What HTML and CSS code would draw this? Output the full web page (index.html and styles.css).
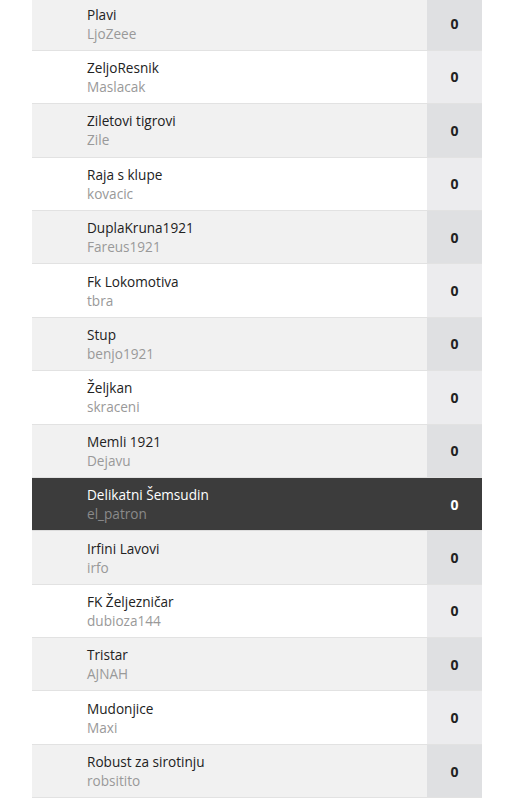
FILE: index.html
```html
<!DOCTYPE html>
<html lang="hr">
<head>
<meta charset="utf-8">
<title>Tablica</title>
<link rel="stylesheet" href="styles.css">
</head>
<body>
<ul class="table">
  <li class="row alt"><div class="team"><span class="name">Plavi</span><span class="user">LjoZeee</span></div><div class="score">0</div></li>
  <li class="row"><div class="team"><span class="name">ZeljoResnik</span><span class="user">Maslacak</span></div><div class="score">0</div></li>
  <li class="row alt"><div class="team"><span class="name">Ziletovi tigrovi</span><span class="user">Zile</span></div><div class="score">0</div></li>
  <li class="row"><div class="team"><span class="name">Raja s klupe</span><span class="user">kovacic</span></div><div class="score">0</div></li>
  <li class="row alt"><div class="team"><span class="name">DuplaKruna1921</span><span class="user">Fareus1921</span></div><div class="score">0</div></li>
  <li class="row"><div class="team"><span class="name">Fk Lokomotiva</span><span class="user">tbra</span></div><div class="score">0</div></li>
  <li class="row alt"><div class="team"><span class="name">Stup</span><span class="user">benjo1921</span></div><div class="score">0</div></li>
  <li class="row"><div class="team"><span class="name">Željkan</span><span class="user">skraceni</span></div><div class="score">0</div></li>
  <li class="row alt"><div class="team"><span class="name">Memli 1921</span><span class="user">Dejavu</span></div><div class="score">0</div></li>
  <li class="row active"><div class="team"><span class="name">Delikatni Šemsudin</span><span class="user">el_patron</span></div><div class="score">0</div></li>
  <li class="row alt"><div class="team"><span class="name">Irfini Lavovi</span><span class="user">irfo</span></div><div class="score">0</div></li>
  <li class="row"><div class="team"><span class="name">FK Željezničar</span><span class="user">dubioza144</span></div><div class="score">0</div></li>
  <li class="row alt"><div class="team"><span class="name">Tristar</span><span class="user">AJNAH</span></div><div class="score">0</div></li>
  <li class="row"><div class="team"><span class="name">Mudonjice</span><span class="user">Maxi</span></div><div class="score">0</div></li>
  <li class="row alt"><div class="team"><span class="name">Robust za sirotinju</span><span class="user">robsitito</span></div><div class="score">0</div></li>
</ul>
</body>
</html>
```
FILE: styles.css
```css
html, body {
  margin: 0;
  padding: 0;
  background: #ffffff;
}
body {
  font-family: "Open Sans", "Noto Sans", sans-serif;
  font-size: 13.6px;
  color: #222222;
}
.table {
  list-style: none;
  margin: -2.6px 32px 0 32px;
  padding: 0;
  width: 450px;
}
.row {
  display: flex;
  height: 53.4px;
  box-sizing: border-box;
  border-bottom: 1px solid #e2e2e2;
  background: #ffffff;
}
.row.alt {
  background: #f1f1f1;
}
.team {
  flex: 1;
  display: flex;
  flex-direction: column;
  justify-content: center;
  padding-left: 55px;
  line-height: 19px;
}
.name {
  color: #222222;
}
.user {
  color: #999999;
}
.score {
  width: 55px;
  display: flex;
  align-items: center;
  justify-content: center;
  font-weight: 700;
  font-size: 14px;
  color: #222222;
  background: #ececee;
}
.row.alt .score {
  background: #dfe0e2;
}
.row.active {
  background: #3c3c3c;
  border-bottom-color: #dcdcdc;
}
.row.active .name {
  color: #ffffff;
}
.row.active .user {
  color: #8a8a8a;
}
.row.active .score {
  background: #3c3c3c;
  color: #ffffff;
}
```
